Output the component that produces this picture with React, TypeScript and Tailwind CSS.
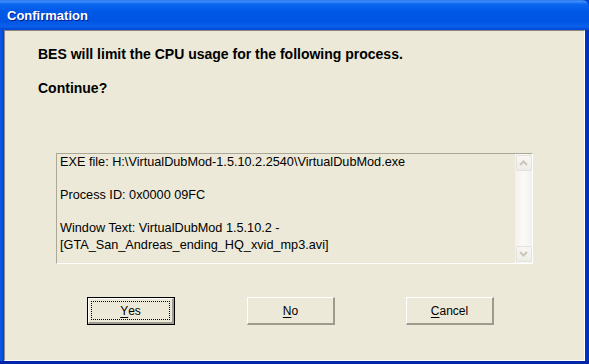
import React from "react";

const sys = { fontFamily: '"Liberation Sans", Arial, sans-serif' };

function Chevron({ up }: { up?: boolean }) {
  return (
    <svg width="9" height="6" viewBox="0 0 9 6">
      <path
        d={up ? "M1 5 L4.5 1.5 L8 5" : "M1 1 L4.5 4.5 L8 1"}
        fill="none"
        stroke="#c9c7ba"
        strokeWidth="2"
      />
    </svg>
  );
}

function ScrollBtn({ up }: { up?: boolean }) {
  return (
    <div className="w-[16px] h-[16px] rounded-[2px] border border-[#e3e2dc] bg-gradient-to-b from-[#f8f7f3] to-[#eeede5] flex items-center justify-center">
      <Chevron up={up} />
    </div>
  );
}

function Btn({ label, u, focused }: { label: string; u: string; focused?: boolean }) {
  const rest = label.slice(1);
  if (focused) {
    return (
      <div className="w-[88px] h-[28px] border border-black bg-[#ece9d8] flex">
        <div className="flex-1 border-t border-l border-t-white border-l-white border-r-2 border-b-2 border-r-[#9d9a8e] border-b-[#9d9a8e] p-[2px] flex">
          <div className="flex-1 border border-dotted border-black flex items-center justify-center text-[12px] text-black" style={sys}>
            <span className="underline underline-offset-2">{u}</span>
            {rest}
          </div>
        </div>
      </div>
    );
  }
  return (
    <div className="w-[88px] h-[28px] bg-[#ece9d8] border-t border-l border-t-white border-l-white border-r-2 border-b-2 border-r-[#9d9a8e] border-b-[#9d9a8e] flex items-center justify-center text-[12px] text-black" style={sys}>
      <span className="underline underline-offset-2">{u}</span>
      {rest}
    </div>
  );
}

export default function App() {
  return (
    <div className="w-[589px] h-[364px] flex flex-col overflow-hidden bg-[#0046d6]">
      {/* Title bar */}
      <div className="h-[30px] shrink-0 rounded-tr-[7px] bg-[linear-gradient(to_bottom,#2a78f2_0%,#3d8cf8_5%,#0a66f0_14%,#0058e6_40%,#0054e3_70%,#0a60ea_88%,#0045d3_100%)] flex items-center pl-[7px] pt-[1px]">
        <span
          className="text-white font-bold text-[13px] [text-shadow:1px_1px_0_#0a1c8c]"
          style={{ fontFamily: '"Liberation Sans", Arial, sans-serif' }}
        >
          Confirmation
        </span>
      </div>
      {/* Body */}
      <div className="flex-1 flex bg-[linear-gradient(to_right,#0a5ae8_0px,#0046d6_4px)]">
        <div className="w-[4px] shrink-0" />
        <div className="flex-1 flex flex-col">
          <div className="flex-1 flex flex-col bg-[#ece9d8] border-t border-l border-t-[#8c8a80] border-l-[#8c8a80] border-r border-b border-r-white border-b-white">
            <div className="pl-[33px] pt-[15px] text-[14px] font-bold text-black leading-[16px]" style={sys}>
              <div>BES will limit the CPU usage for the following process.</div>
              <div className="mt-[18px]">Continue?</div>
            </div>
            {/* listbox */}
            <div className="ml-[51px] mt-[57px] w-[477px] h-[111px] border-t border-l border-t-[#aca899] border-l-[#aca899] border-r border-b border-r-white border-b-white flex">
              <div className="flex-1 pl-[3px] text-[12.7px] leading-[16.5px] text-black" style={sys}>
                <div>EXE file: H:\VirtualDubMod-1.5.10.2.2540\VirtualDubMod.exe</div>
                <div className="h-[16.5px]" />
                <div>Process ID: 0x0000 09FC</div>
                <div className="h-[16.5px]" />
                <div>Window Text: VirtualDubMod 1.5.10.2 -</div>
                <div>[GTA_San_Andreas_ending_HQ_xvid_mp3.avi]</div>
              </div>
              <div className="w-[17px] flex flex-col items-center bg-[linear-gradient(to_right,#f3f1ec,#fbfaf8_50%,#f3f1ec)] py-[1px]">
                <ScrollBtn up />
                <div className="flex-1" />
                <ScrollBtn />
              </div>
            </div>
            {/* buttons */}
            <div className="flex ml-[82px] mt-[33px]">
              <Btn label="Yes" u="Y" focused />
              <div className="ml-[72px]">
                <Btn label="No" u="N" />
              </div>
              <div className="ml-[71px]">
                <Btn label="Cancel" u="C" />
              </div>
            </div>
          </div>
        </div>
        <div className="w-[4px] shrink-0 bg-[#0032be]" />
      </div>
      <div className="h-[3px] shrink-0 bg-[#0025a8]" />
    </div>
  );
}
